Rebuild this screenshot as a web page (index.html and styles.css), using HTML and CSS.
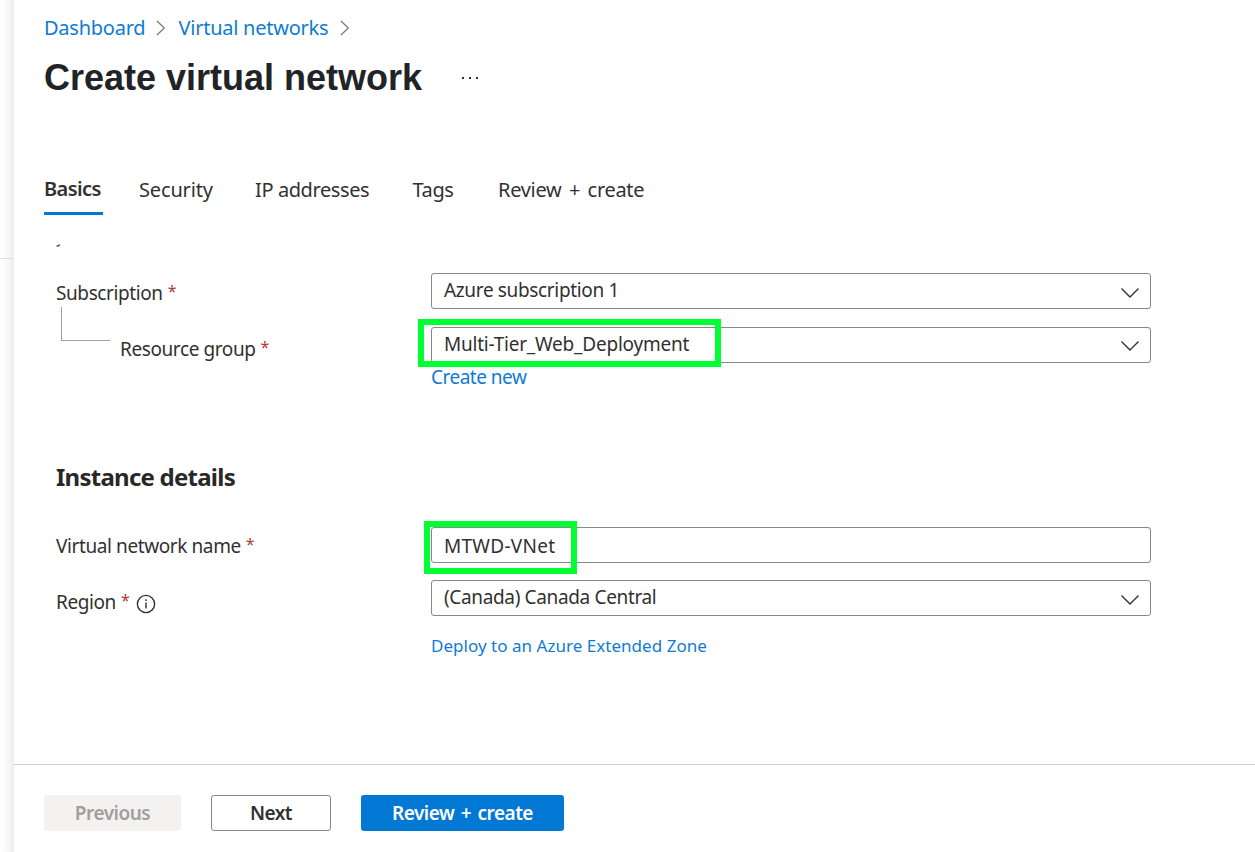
FILE: index.html
```html
<!DOCTYPE html>
<html lang="en">
<head>
<meta charset="utf-8">
<title>Create virtual network</title>
<link rel="stylesheet" href="styles.css">
</head>
<body>
<div class="shell">
  <aside class="edge"><div class="edge-line"></div></aside>
  <main class="blade">
    <nav class="crumbs">
      <a class="crumb crumb-dash">Dashboard</a>
      <svg class="crumb-sep" width="10" height="16" viewBox="0 0 10 16"><path d="M1 1l7.3 7L1 15"/></svg>
      <a class="crumb crumb-vnet">Virtual networks</a>
      <svg class="crumb-sep" width="10" height="16" viewBox="0 0 10 16"><path d="M1 1l7.3 7L1 15"/></svg>
    </nav>
    <header class="title-row">
      <h1>Create virtual network</h1>
      <svg class="more" width="18" height="4" viewBox="0 0 18 4"><path d="M1 1h2v2H1zM8 1h2v2H8zM15 1h2v2h-2z"/></svg>
    </header>
    <div class="tabs">
      <div class="tab tab-basics active"><span>Basics</span></div>
      <div class="tab tab-security"><span>Security</span></div>
      <div class="tab tab-ip"><span>IP addresses</span></div>
      <div class="tab tab-tags"><span>Tags</span></div>
      <div class="tab tab-review"><span>Review + create</span></div>
    </div>
    <section class="form">
      <svg class="tail" width="6" height="3" viewBox="0 0 6 3"><path d="M0.5 2Q2.5 2.4 3.8 0.7"/></svg>
      <div class="row row-sub">
        <div class="label"><span class="t-sub">Subscription</span><span class="req">*</span></div>
        <div class="field"><span class="t-azure">Azure subscription 1</span><svg class="chev" width="20" height="12" viewBox="0 0 20 12"><path d="M1.5 1.5l8.5 8.5 8.5-8.5"/></svg></div>
      </div>
      <div class="row row-group">
        <div class="label nested"><i class="elbow"></i><span class="t-group">Resource group</span><span class="req">*</span></div>
        <div class="control">
          <div class="field"><span class="t-multi">Multi-Tier_Web_Deployment</span><svg class="chev" width="20" height="12" viewBox="0 0 20 12"><path d="M1.5 1.5l8.5 8.5 8.5-8.5"/></svg><i class="mark mark-group"></i></div>
          <a class="link t-new">Create new</a>
        </div>
      </div>
      <h2>Instance details</h2>
      <div class="row row-name">
        <div class="label"><span class="t-name">Virtual network name</span><span class="req">*</span></div>
        <div class="field"><span class="t-mtwd">MTWD-VNet</span><i class="mark mark-name"></i></div>
      </div>
      <div class="row row-region">
        <div class="label"><span class="t-region">Region</span><span class="req">*</span>
          <svg class="info" width="20" height="20" viewBox="0 0 20 20"><circle cx="10" cy="10" r="8.6"/><path d="M10 8.4v6M10 5.2v1.7"/></svg>
        </div>
        <div class="control">
          <div class="field"><span class="t-canada">(Canada) Canada Central</span><svg class="chev" width="20" height="12" viewBox="0 0 20 12"><path d="M1.5 1.5l8.5 8.5 8.5-8.5"/></svg></div>
          <a class="link t-zone">Deploy to an Azure Extended Zone</a>
        </div>
      </div>
    </section>
    <footer class="actions">
      <button class="btn btn-prev" disabled><span>Previous</span></button>
      <button class="btn btn-next"><span>Next</span></button>
      <button class="btn btn-primary"><span>Review + create</span></button>
    </footer>
  </main>
</div>
</body>
</html>
```
FILE: styles.css
```css
* { box-sizing: border-box; }
body { margin: 0; background: #fff; color: #323130; font-family: "Noto Sans", sans-serif; font-size: 19px; line-height: 24px; white-space: nowrap; }
.shell { display: flex; width: 1255px; height: 852px; overflow: hidden; }
.edge { width: 14px; padding-top: 258px; background: linear-gradient(90deg, #fff 0, #fafafa 45%, #ededed 100%); }
.edge-line { height: 1px; background: #dedede; }
.blade { flex: 1; display: flex; flex-direction: column; }
a { color: #0f7bd5; text-decoration: none; }

.crumbs { display: flex; align-items: center; height: 56px; padding-left: 30px; font-size: 20px; letter-spacing: -0.25px; }
.crumb-dash { width: 112px; }
.crumb-vnet { width: 161px; margin-left: 12.5px; }
.crumb-sep { fill: none; stroke: #757575; stroke-width: 1.2; }

.title-row { display: flex; align-items: center; height: 44px; padding-left: 30px; }
h1 { margin: 0; width: 417px; font: bold 36px/44px "Liberation Sans", Arial, sans-serif; color: #212326; }
.more { fill: #323130; }

.tabs { display: flex; height: 43px; margin-top: 72px; padding-left: 30px; font-size: 20px; line-height: 35px; letter-spacing: -0.4px; }
.tab { height: 43px; }
.active { height: 43px; font-weight: 600; border-bottom: 3px solid #0078d4; line-height: 34px; }
.tab-basics { width: 59px; margin-right: 36px; letter-spacing: -0.6px; }
.tab-security { width: 116px; letter-spacing: -0.15px; }
.tab-ip { width: 157.5px; }
.tab-tags { width: 85.5px; }
.tab-review { letter-spacing: -0.3px; word-spacing: 2.6px; }

.form { display: flex; flex-direction: column; height: 549px; padding: 29px 0 0 42px; }
.tail { height: 3px; fill: none; stroke: #323130; stroke-width: 1.2; }
.row { display: grid; grid-template-columns: 375px 720px; align-items: start; }
.row-sub { margin-top: 26px; height: 54px; }
.row-group { height: 136px; }
.row-name { margin-top: 36px; height: 53px; }
.label { display: flex; align-items: center; height: 24px; margin-top: 8px; letter-spacing: -0.4px; }
.row-group .label { margin-top: 10px; }
.row-name .label { margin-top: 7px; }
.row-region .label { margin-top: 10px; }
.req { margin: -5px 0 0 5px; color: #b4383d; font-size: 16px; }
.nested { position: relative; padding-left: 64px; }
.elbow { position: absolute; left: 5px; top: -30px; width: 49px; height: 34px; border: solid #a19f9d; border-width: 0 0 1px 1px; }
.info { margin: 3px 0 0 7px; fill: none; stroke: #323130; stroke-width: 1.4; }
.field { position: relative; display: flex; align-items: center; justify-content: space-between; height: 36px; padding: 0 10px 2px 12px; border: 1px solid #8a8886; border-radius: 3px; }
.row-name .field { padding: 1px 10px 0 12px; }
.chev { margin-top: 5px; fill: none; stroke: #323130; stroke-width: 1.4; }
.row-group .chev { margin-top: 3px; }
.t-azure { letter-spacing: -0.35px; }
.t-multi { letter-spacing: -0.22px; }
.t-mtwd { letter-spacing: 0.28px; }
.t-canada { letter-spacing: -0.35px; }
.link { display: block; margin-top: 2px; }
.t-new { letter-spacing: -0.5px; }
.t-zone { margin-top: 18px; font-size: 17px; letter-spacing: 0.03px; }
.mark { position: absolute; border: 6px solid #00ff33; }
.mark-group { left: -14px; top: -9px; width: 303px; height: 48px; }
.mark-name { left: -8px; top: -7px; width: 153px; height: 53px; }
h2 { margin: 0; height: 28px; font-size: 24px; line-height: 28px; font-weight: 700; letter-spacing: -0.75px; color: #292827; }

.actions { display: flex; gap: 30px; height: 88px; padding: 30px 0 0 30px; border-top: 1px solid #d2d0ce; }
.btn { height: 36px; padding: 0; border: 0; border-radius: 3px; font: 600 19px/24px "Noto Sans", sans-serif; letter-spacing: -0.5px; color: #323130; background: #fff; }
.btn-prev { width: 137px; color: #a19f9d; background: #f3f2f1; }
.btn-next { width: 120px; border: 1px solid #8a8886; }
.btn-primary { width: 203px; word-spacing: 2px; color: #fff; background: #0078d4; }
```
